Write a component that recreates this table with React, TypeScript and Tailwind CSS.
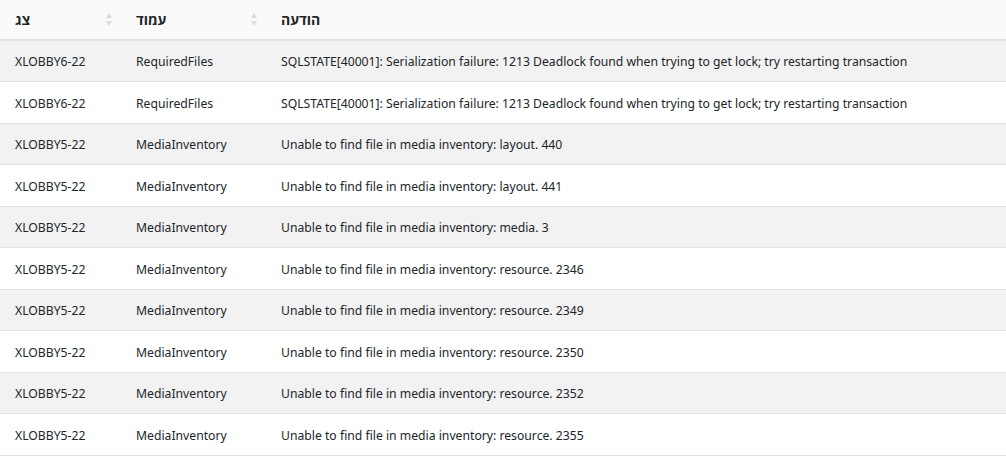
import React from "react";

const rows = [
  ["XLOBBY6-22", "RequiredFiles", "SQLSTATE[40001]: Serialization failure: 1213 Deadlock found when trying to get lock; try restarting transaction"],
  ["XLOBBY6-22", "RequiredFiles", "SQLSTATE[40001]: Serialization failure: 1213 Deadlock found when trying to get lock; try restarting transaction"],
  ["XLOBBY5-22", "MediaInventory", "Unable to find file in media inventory: layout. 440"],
  ["XLOBBY5-22", "MediaInventory", "Unable to find file in media inventory: layout. 441"],
  ["XLOBBY5-22", "MediaInventory", "Unable to find file in media inventory: media. 3"],
  ["XLOBBY5-22", "MediaInventory", "Unable to find file in media inventory: resource. 2346"],
  ["XLOBBY5-22", "MediaInventory", "Unable to find file in media inventory: resource. 2349"],
  ["XLOBBY5-22", "MediaInventory", "Unable to find file in media inventory: resource. 2350"],
  ["XLOBBY5-22", "MediaInventory", "Unable to find file in media inventory: resource. 2352"],
  ["XLOBBY5-22", "MediaInventory", "Unable to find file in media inventory: resource. 2355"],
];

function SortIcon() {
  return (
    <svg width="6" height="13" viewBox="0 0 6 13" className="text-[#dcdcdc]">
      <path d="M3 0 L6 5 L0 5 Z" fill="currentColor" />
      <path d="M0 8 L6 8 L3 13 Z" fill="currentColor" />
    </svg>
  );
}

export default function App() {
  return (
    <div
      className="w-[1006px] h-[464px] overflow-hidden bg-white text-[#212529]"
      style={{ fontFamily: '"Noto Sans", "Open Sans", sans-serif' }}
    >
      <table className="w-full table-fixed border-collapse text-[12.2px]">
        <colgroup>
          <col className="w-[121px]" />
          <col className="w-[145px]" />
          <col />
        </colgroup>
        <thead>
          <tr className="h-[40px] bg-[#fafafa] border-b-2 border-[#dee2e6]">
            <th className="pl-[15px] pr-[9px] text-left font-bold text-[14px]">
              <div className="flex items-center justify-between">
                <span>צג</span>
                <SortIcon />
              </div>
            </th>
            <th className="pl-[15px] pr-[9px] text-left font-bold text-[14px]">
              <div className="flex items-center justify-between">
                <span>עמוד</span>
                <SortIcon />
              </div>
            </th>
            <th className="px-[15px] text-left font-bold text-[14px]">הודעה</th>
          </tr>
        </thead>
        <tbody>
          {rows.map((r, i) => (
            <tr
              key={i}
              className={`h-[41.5px] border-b border-[#e2e2e2] ${i % 2 === 0 ? "bg-[#f2f2f2]" : "bg-white"}`}
            >
              <td className="px-[15px] pt-[3px] whitespace-nowrap">{r[0]}</td>
              <td className="px-[15px] pt-[3px] whitespace-nowrap">{r[1]}</td>
              <td className="px-[15px] pt-[3px] whitespace-nowrap">{r[2]}</td>
            </tr>
          ))}
        </tbody>
      </table>
    </div>
  );
}
